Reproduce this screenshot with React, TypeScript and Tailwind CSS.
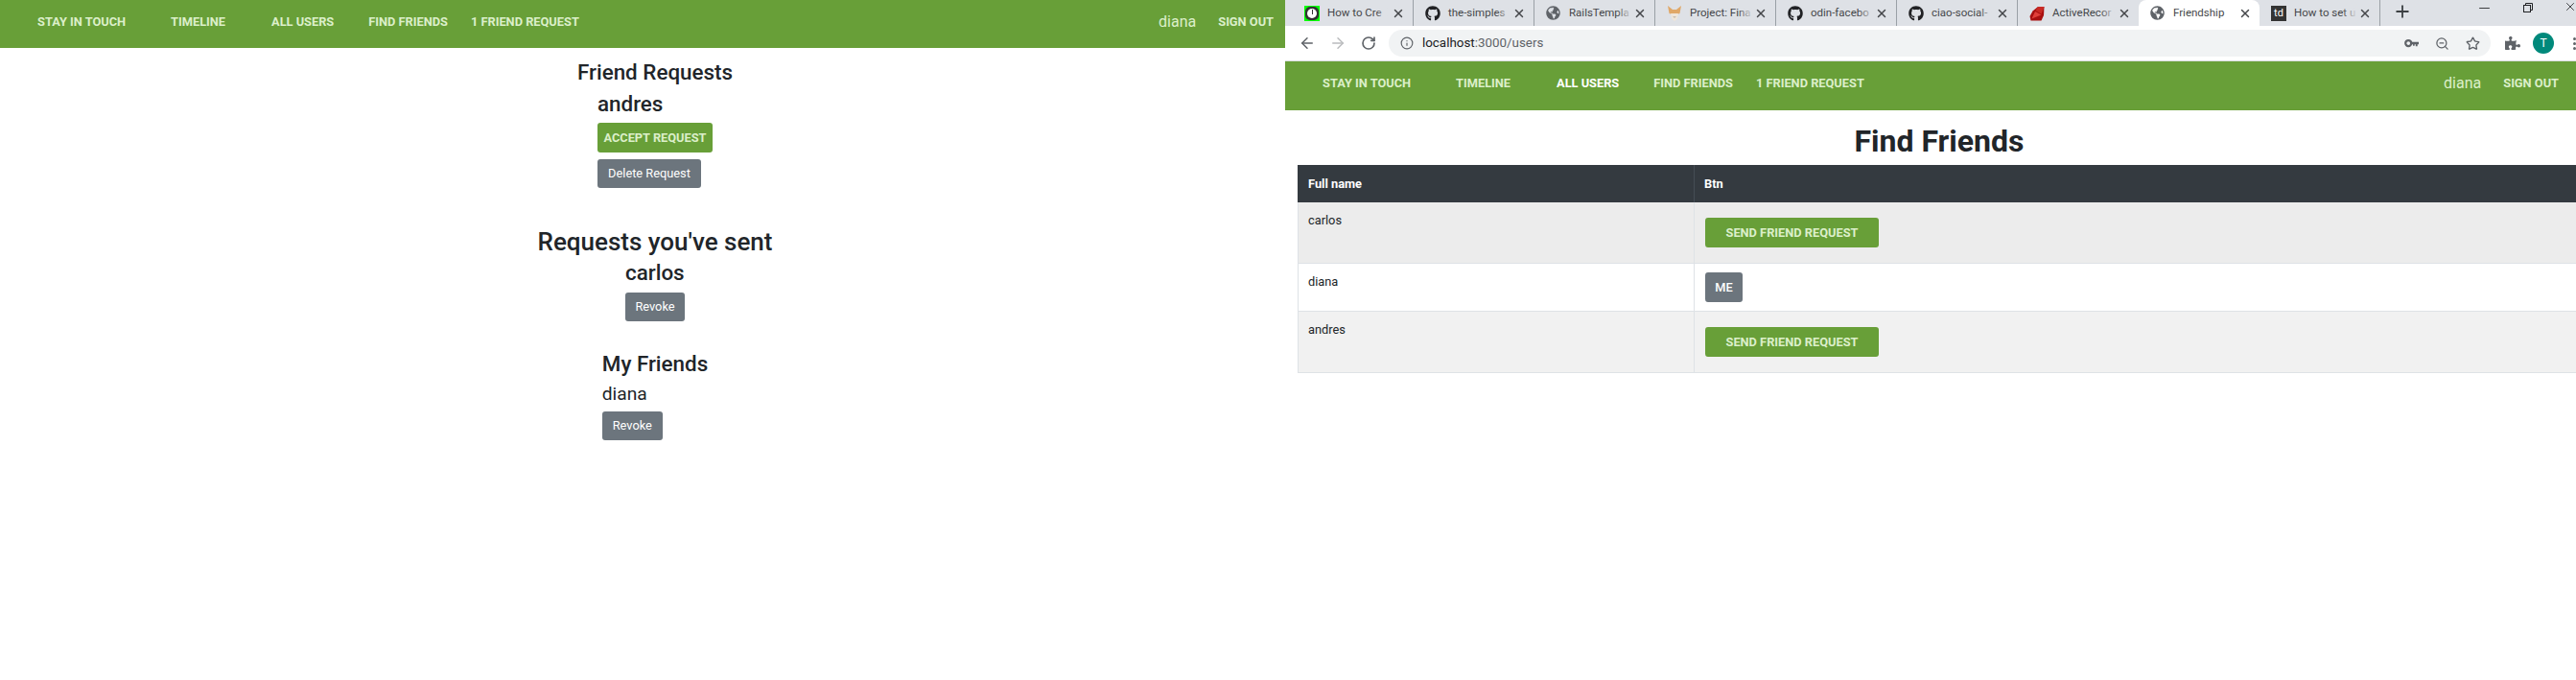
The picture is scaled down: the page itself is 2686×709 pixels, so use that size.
import { FaGithub, FaGlobeAmericas, FaPuzzlePiece } from 'react-icons/fa';
import { ArrowLeft, ArrowRight, Info, Minus, Plus, RotateCw, Star, X, ZoomOut } from 'lucide-react';
import type { ReactNode } from 'react';

const navItems = [
  { label: 'Stay in touch', className: 'ml-0' },
  { label: 'Timeline', className: 'ml-[47px]' },
  { label: 'All users', className: 'ml-[48px]', active: true },
  { label: 'Find friends', className: 'ml-[36px]' },
  { label: '1 friend request', className: 'ml-[24px]' },
];

// The top bar of the app, used on both halves of the picture
const NavBar = ({ activeUsers, className }: { activeUsers: boolean; className: string }) => (
  <nav className={`flex items-center bg-[#689f38] pb-[5px] text-[12.8px] font-bold uppercase text-[#dcefca] ${className}`}>
    {navItems.map((item) => (
      <a key={item.label} className={`${item.className} ${item.active && activeUsers ? 'text-white' : ''}`}>
        {item.label}
      </a>
    ))}
    <span className="ml-auto text-[16px] font-normal normal-case">diana</span>
    <a className="ml-[23px]">Sign out</a>
  </nav>
);

const GreenButton = ({ children, className }: { children: ReactNode; className: string }) => (
  <button className={`rounded-[3px] bg-[#689f38] text-[12.8px] font-bold uppercase text-[#dcefca] ${className}`}>
    {children}
  </button>
);

const GrayButton = ({ children, className }: { children: ReactNode; className: string }) => (
  <button className={`rounded-[3px] bg-[#6c757d] text-[12.8px] text-white ${className}`}>{children}</button>
);

const RubyIcon = () => (
  <svg viewBox="0 0 16 16" className="h-4 w-4">
    <path d="M9 1 L15.5 1 L15 10 L12.5 15.5 L1.5 15.5 L0.5 11 L3.5 5.5 Z" fill="#a81010" />
    <path d="M2.5 13.5 L6 6 L12.5 9.5 Z" fill="#e0403a" />
    <path d="M9 1 L15.5 1 L12.5 8.5 L6.5 5 Z" fill="#c92a24" />
  </svg>
);

const FoxIcon = () => (
  <svg viewBox="0 0 16 16" className="h-4 w-4">
    <path d="M1 0 L6 4 L10 4 L15 0 L13.5 8 L8 10 L2.5 8 Z" fill="#e0a868" />
    <path d="M4 8 L12 8 L10.5 14 L8 16 L5.5 14 Z" fill="#efe6da" />
    <path d="M6 11 L10 11 L8 13 Z" fill="#c9bdae" />
  </svg>
);

const KeyIcon = () => (
  <svg viewBox="0 0 16 10" className="h-[10px] w-[15px] text-[#5f6368]">
    <circle cx="4.5" cy="5" r="3.2" fill="none" stroke="currentColor" strokeWidth="2.4" />
    <path d="M8 3.6 H16 V6.4 H14.6 V8.4 H12.6 V6.4 H11.4 V7.8 H9.6 V6.4 H8 Z" fill="currentColor" />
  </svg>
);

const RestoreIcon = () => (
  <svg viewBox="0 0 10 10" className="h-[10px] w-[10px] text-[#202124]" fill="none" stroke="currentColor">
    <rect x="0.5" y="2.5" width="7" height="7" />
    <path d="M2.5 2.5 V0.5 H9.5 V7.5 H7.5" />
  </svg>
);

const globe = <FaGlobeAmericas className="h-[15px] w-[15px] text-[#5f6368]" />;
const github = <FaGithub className="h-4 w-4 text-[#202124]" />;

const tabs: { title: string; icon: ReactNode; active?: boolean; noSep?: boolean }[] = [
  {
    title: 'How to Cre',
    icon: (
      <span className="flex h-4 w-4 items-center justify-center bg-[#00ff00]">
        <span className="flex h-[14px] w-[14px] items-center justify-center rounded-[5px] bg-[#333]">
          <span className="flex h-[10px] w-[10px] justify-center rounded-full bg-white">
            <i className="mt-[1px] h-[5px] w-[1px] bg-[#333]" />
          </span>
        </span>
      </span>
    ),
  },
  { title: 'the-simples', icon: github },
  { title: 'RailsTempla', icon: globe },
  { title: 'Project: Fina', icon: <FoxIcon /> },
  { title: 'odin-facebo', icon: github },
  { title: 'ciao-social-', icon: github },
  { title: 'ActiveRecor', icon: <RubyIcon />, noSep: true },
  { title: 'Friendship', icon: globe, active: true, noSep: true },
  {
    title: 'How to set u',
    icon: (
      <span className="flex h-4 w-4 items-center justify-center bg-[#333] text-[11px] leading-none text-white">td</span>
    ),
  },
];

const Tab = ({ title, icon, active, noSep }: (typeof tabs)[number]) => (
  <div
    className={`flex h-[27px] w-[126px] shrink-0 items-center pl-[12px] pr-[8px] text-[11.5px] text-[#45474a] ${
      active ? 'rounded-t-[8px] bg-white' : noSep ? '' : 'border-r border-[#9aa0a6]'
    }`}
  >
    <span className="flex w-[24px] shrink-0">{icon}</span>
    <span className="relative w-[66px] whitespace-nowrap">
      {title}
      {!active && <i className="absolute inset-y-0 right-0 w-[16px] bg-gradient-to-r from-transparent to-[#dee1e6]" />}
    </span>
    <X className="ml-auto h-3.5 w-3.5 text-[#45474a]" strokeWidth={2.5} />
  </div>
);

const BrowserChrome = () => (
  <div>
    <div className="flex h-[27px] bg-[#dee1e6] pl-[8px]">
      {tabs.map((tab) => (
        <Tab key={tab.title} {...tab} />
      ))}
      <Plus className="ml-[13px] mt-[2px] h-[20px] w-[20px] text-[#3c4043]" strokeWidth={2.2} />
      <div className="ml-auto flex items-start text-[#202124]">
        <Minus className="h-[17px] w-[17px]" strokeWidth={1.2} />
        <span className="ml-[32px] mt-[3px]">
          <RestoreIcon />
        </span>
        <X className="-mr-[1px] ml-[32px] h-[14px] w-[14px]" strokeWidth={1.4} />
      </div>
    </div>
    <div className="flex h-[37px] items-center border-b border-[#dadce0] bg-white pl-[14px]">
      <ArrowLeft className="h-[18px] w-[18px] text-[#5f6368]" />
      <ArrowRight className="ml-[14px] h-[18px] w-[18px] text-[#babcbe]" />
      <RotateCw className="ml-[15px] h-[16px] w-[16px] text-[#5f6368]" strokeWidth={2.5} />
      <div className="ml-[13px] flex h-[28px] w-[1150px] items-center rounded-full bg-[#f1f3f4] pl-[12px] pr-[11px]">
        <Info className="h-[14px] w-[14px] text-[#5f6368]" />
        <span className="ml-[9px] text-[13.4px] text-[#5f6368]">
          <span className="text-[#202124]">localhost</span>:3000/users
        </span>
        <span className="ml-auto">
          <KeyIcon />
        </span>
        <ZoomOut className="ml-[17px] h-[15px] w-[15px] text-[#5f6368]" />
        <Star className="ml-[17px] h-[15px] w-[15px] text-[#5f6368]" strokeWidth={2.2} />
      </div>
      <FaPuzzlePiece className="ml-[15px] h-[16px] w-[16px] text-[#5f6368]" />
      <span className="ml-[13px] flex h-[22px] w-[22px] items-center justify-center rounded-full bg-[#00897b] text-[12px] text-white">
        T
      </span>
      <span className="ml-[20px] flex flex-col gap-[2px]">
        <i className="h-[3px] w-[3px] rounded-full bg-[#5f6368]" />
        <i className="h-[3px] w-[3px] rounded-full bg-[#5f6368]" />
        <i className="h-[3px] w-[3px] rounded-full bg-[#5f6368]" />
      </span>
    </div>
  </div>
);

const rows = [
  { name: 'carlos', rowClass: 'h-[64px] bg-[#ececec]', self: false },
  { name: 'diana', rowClass: 'h-[50px] bg-white', self: true },
  { name: 'andres', rowClass: 'h-[64px] bg-[#f1f1f1]', self: false },
];

// The table runs on past the right edge of the screenshot
const FriendsTable = () => (
  <div className="ml-[13px] w-[1400px] text-[12.8px] text-[#212529]">
    <div className="flex h-[39px] bg-[#343a40] text-[12.8px] font-bold text-white">
      <div className="flex w-[414px] items-center border-r border-[#454d55] pl-[11px]">Full name</div>
      <div className="flex items-center pl-[10px]">Btn</div>
    </div>
    {rows.map((row) => (
      <div key={row.name} className={`flex border-x border-b border-[#dee2e6] ${row.rowClass}`}>
        <div className="w-[413px] border-r border-[#dee2e6] pl-[10px] pt-[9px] leading-[20px]">{row.name}</div>
        <div className={`pl-[11px] ${row.self ? 'pt-[9px]' : 'pt-[16px]'}`}>
          {row.self ? (
            <GrayButton className="h-[31px] w-[39px] font-medium">ME</GrayButton>
          ) : (
            <GreenButton className="h-[31px] w-[181px]">Send friend request</GreenButton>
          )}
        </div>
      </div>
    ))}
  </div>
);

const LeftContent = () => (
  <div className="flex flex-col items-center pl-[26px] text-[#212529]">
    <h4 className="mt-[12px] text-[22.4px] font-medium leading-[27px]">Friend Requests</h4>
    <div className="mt-[6px] flex flex-col items-start">
      <h5 className="text-[22.4px] font-medium leading-[27px]">andres</h5>
      <GreenButton className="mt-[6px] h-[31px] w-[120px]">Accept request</GreenButton>
      <GrayButton className="mt-[7px] h-[30px] w-[108px]">Delete Request</GrayButton>
    </div>
    <h3 className="mt-[40px] text-[26px] font-medium leading-[32px]">Requests you&apos;ve sent</h3>
    <div className="mt-[3px] flex flex-col items-start">
      <h5 className="text-[22.4px] font-medium leading-[27px]">carlos</h5>
      <GrayButton className="mt-[7px] h-[30px] w-[62px]">Revoke</GrayButton>
    </div>
    <div className="mt-[31px] flex flex-col items-start">
      <h4 className="text-[22.4px] font-medium leading-[27px]">My Friends</h4>
      <p className="mt-[6px] text-[19.2px] leading-[24px]">diana</p>
      <GrayButton className="mt-[6px] h-[30px] w-[63px]">Revoke</GrayButton>
    </div>
  </div>
);

export default function App() {
  return (
    <div className="flex h-[709px] w-[2686px] overflow-hidden bg-white font-['Roboto',sans-serif]">
      <div className="w-[1340px] shrink-0">
        <NavBar activeUsers={false} className="h-[50px] pl-[39px] pr-[12px]" />
        <LeftContent />
      </div>
      <div className="w-[1346px] shrink-0">
        <BrowserChrome />
        <NavBar activeUsers className="h-[51px] pl-[39px] pr-[18px]" />
        <h1 className="mt-[13px] pb-[6px] pl-[18px] text-center text-[32px] font-bold leading-[38px] text-[#212529]">
          Find Friends
        </h1>
        <FriendsTable />
      </div>
    </div>
  );
}
